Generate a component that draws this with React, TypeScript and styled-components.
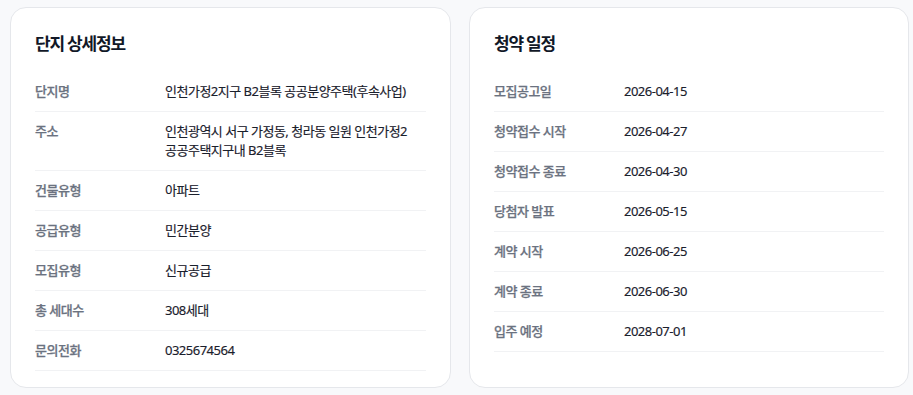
import React from 'react';
import styled, { createGlobalStyle } from 'styled-components';

const GlobalStyle = createGlobalStyle`
  * {
    box-sizing: border-box;
  }

  body {
    margin: 0;
    background: #f8f9fb;
    font-family: "Noto Sans", "Noto Sans CJK KR", sans-serif;
  }
`;

const Page = styled.div`
  display: grid;
  grid-template-columns: 441px 440px;
  gap: 18px;
  padding: 7px 4px 8px 10px;
`;

const Card = styled.section`
  background: #ffffff;
  border: 1px solid #e5e7eb;
  border-radius: 16px;
  padding: 24px 24px 16px;
`;

const Title = styled.h2`
  margin: 0 0 16px;
  font-size: 17px;
  line-height: 24px;
  font-weight: 700;
  letter-spacing: -1.2px;
  color: #111827;
`;

const List = styled.dl`
  margin: 0;
`;

const Row = styled.div`
  display: grid;
  grid-template-columns: 130px minmax(0, 1fr);
  padding: 10px 0;
  border-bottom: 1px solid #f1f2f4;
  font-size: 13px;
  line-height: 19px;
  letter-spacing: -0.5px;
  word-break: keep-all;
`;

const Label = styled.dt`
  margin: 0;
  color: #6b7280;
  font-weight: 500;
  -webkit-text-stroke: 0.25px currentColor;
`;

const Value = styled.dd`
  margin: 0;
  color: #1a202c;
  font-weight: 400;
  -webkit-text-stroke: 0.15px currentColor;
`;

type Item = { label: string; value: string };

const complexInfo: Item[] = [
  { label: '단지명', value: '인천가정2지구 B2블록 공공분양주택(후속사업)' },
  { label: '주소', value: '인천광역시 서구 가정동, 청라동 일원 인천가정2 공공주택지구내 B2블록' },
  { label: '건물유형', value: '아파트' },
  { label: '공급유형', value: '민간분양' },
  { label: '모집유형', value: '신규공급' },
  { label: '총 세대수', value: '308세대' },
  { label: '문의전화', value: '0325674564' },
];

const schedule: Item[] = [
  { label: '모집공고일', value: '2026-04-15' },
  { label: '청약접수 시작', value: '2026-04-27' },
  { label: '청약접수 종료', value: '2026-04-30' },
  { label: '당첨자 발표', value: '2026-05-15' },
  { label: '계약 시작', value: '2026-06-25' },
  { label: '계약 종료', value: '2026-06-30' },
  { label: '입주 예정', value: '2028-07-01' },
];

const InfoCard: React.FC<{ title: string; items: Item[] }> = ({ title, items }) => (
  <Card>
    <Title>{title}</Title>
    <List>
      {items.map((item) => (
        <Row key={item.label}>
          <Label>{item.label}</Label>
          <Value>{item.value}</Value>
        </Row>
      ))}
    </List>
  </Card>
);

export default function App() {
  return (
    <>
      <GlobalStyle />
      <Page>
        <InfoCard title="단지 상세정보" items={complexInfo} />
        <InfoCard title="청약 일정" items={schedule} />
      </Page>
    </>
  );
}
